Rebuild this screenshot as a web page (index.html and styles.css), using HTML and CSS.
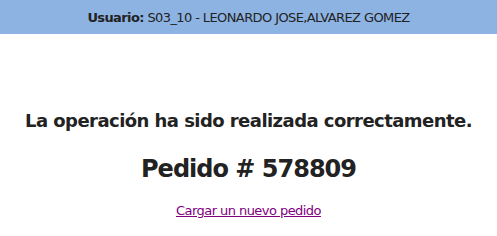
FILE: index.html
```html
<!DOCTYPE html>
<html lang="es">
<head>
<meta charset="utf-8">
<link rel="stylesheet" href="styles.css">
</head>
<body>
<div class="topbar"><span><b>Usuario:</b> S03_10 - LEONARDO JOSE,ALVAREZ GOMEZ</span></div>
<main class="content">
  <h2 class="msg">La operación ha sido realizada correctamente.</h2>
  <h1 class="order">Pedido # 578809</h1>
  <a class="link" href="#">Cargar un nuevo pedido</a>
</main>
</body>
</html>
```
FILE: styles.css
```css
html, body {
  margin: 0;
  padding: 0;
  background: #fff;
}
body {
  font-family: "DejaVu Sans", Verdana, sans-serif;
  color: #222;
}
.topbar {
  height: 34px;
  background: #8db3e2;
  display: flex;
  align-items: center;
  justify-content: center;
  font-size: 13px;
  letter-spacing: -0.6px;
  color: #222;
}
.content {
  display: flex;
  flex-direction: column;
  align-items: center;
  padding-top: 76px;
}
.msg {
  margin: 0;
  font-size: 18px;
  font-weight: bold;
  line-height: 22px;
  letter-spacing: -0.55px;
}
.order {
  margin: 23px 0 0;
  font-size: 24px;
  font-weight: bold;
  line-height: 28px;
  letter-spacing: -1px;
}
.link {
  margin-top: 20px;
  font-size: 13px;
  letter-spacing: -0.55px;
  color: #800080;
  text-decoration: underline;
}
```
